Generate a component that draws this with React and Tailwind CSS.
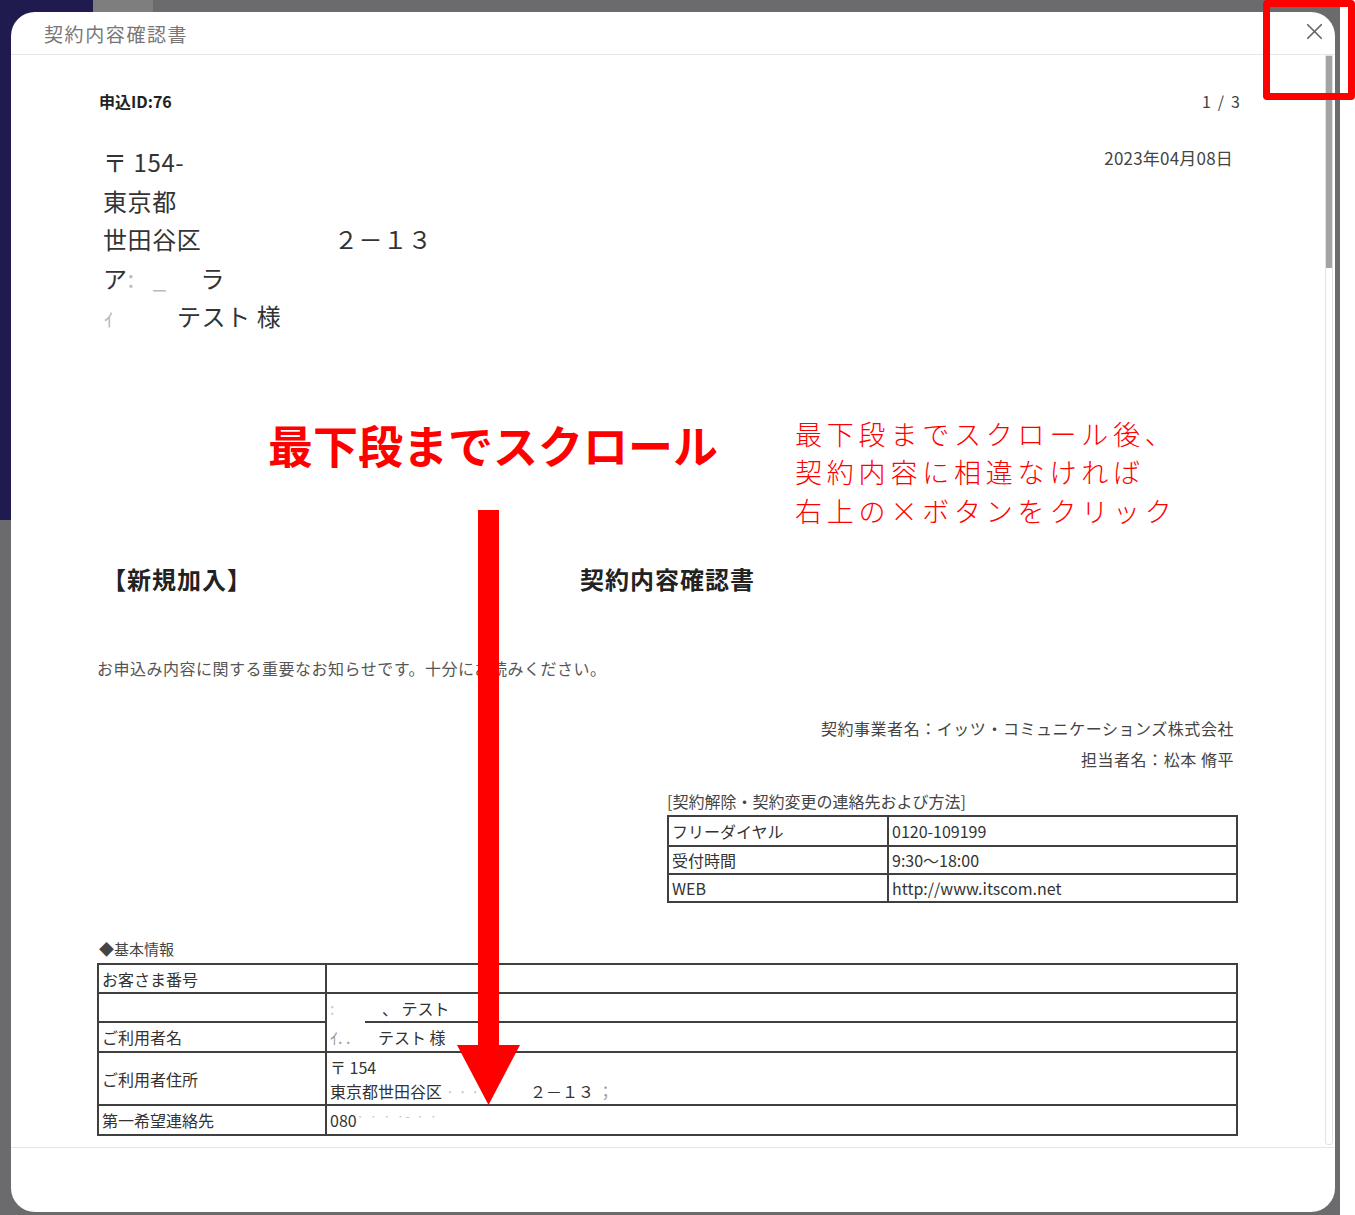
import { X } from 'lucide-react'

function Cell({ children, className = '' }) {
  return <div className={`flex items-center pl-[3px] text-[16px] text-[#333] ${className}`}>{children}</div>
}

function ContactTable() {
  const rows = [
    ['フリーダイヤル', '0120-109199'],
    ['受付時間', '9:30～18:00'],
    ['WEB', 'http://www.itscom.net'],
  ]
  return (
    <div className="border-2 border-[#404040] w-[571px]">
      {rows.map(([k, v], i) => (
        <div key={k} className={`grid grid-cols-[220px_1fr] h-[28px] ${i > 0 ? 'border-t-2 border-[#404040]' : ''}`}>
          <Cell className="border-r-2 border-[#404040]">{k}</Cell>
          <Cell>{v}</Cell>
        </div>
      ))}
    </div>
  )
}

function InfoTable() {
  return (
    <div className="border-2 border-[#404040] w-[1141px]">
      <div className="grid grid-cols-[228px_1fr] h-[27px]">
        <Cell className="border-r-2 border-[#404040]">お客さま番号</Cell>
        <Cell />
      </div>
      <div className="grid grid-cols-[228px_1fr] h-[29px] border-t-2 border-[#404040]">
        <Cell className="border-r-2 border-[#404040]" />
        <Cell className="relative">
          <span className="text-[#ccc] w-[52px]">:</span>
          <span>、 テスト</span>
          <span className="absolute left-0 -bottom-[2px] w-[38px] h-[2px] bg-white" />
        </Cell>
      </div>
      <div className="grid grid-cols-[228px_1fr] h-[30px] border-t-2 border-[#404040]">
        <Cell className="border-r-2 border-[#404040]">ご利用者名</Cell>
        <Cell>
          <span className="text-[#999] w-[48px]">ｲ. .</span>
          <span>テスト 様</span>
        </Cell>
      </div>
      <div className="grid grid-cols-[228px_1fr] h-[53px] border-t-2 border-[#404040]">
        <Cell className="border-r-2 border-[#404040]">ご利用者住所</Cell>
        <div className="flex flex-col justify-center pl-[3px] text-[16px] text-[#333] leading-[24px]">
          <span>〒 154</span>
          <span className="flex">
            <span className="w-[200px]">東京都世田谷区<span className="text-[#ccc]"> · · · ·</span></span>
            <span>２－１３ <span className="text-[#999]">；</span></span>
          </span>
        </div>
      </div>
      <div className="grid grid-cols-[228px_1fr] h-[30px] border-t-2 border-[#404040]">
        <Cell className="border-r-2 border-[#404040]">第一希望連絡先</Cell>
        <Cell>
          080<span className="text-[#bbb] text-[12px] -mt-[8px] tracking-[2px]">· · · ·- · ·</span>
        </Cell>
      </div>
    </div>
  )
}

function Documento() {
  return (
    <div className="pl-[86px] pt-[34px] w-[1227px]">
      <div className="flex justify-between items-center h-[24px] text-[16px] text-[#222]">
        <span className="ml-[2px] font-semibold">申込ID:76</span>
        <span className="mr-[-2px] flex gap-[7px] text-[16px] text-[#444]">
          <span>1</span>
          <span>/</span>
          <span>3</span>
        </span>
      </div>

      <div className="flex justify-between mt-[30px]">
        <div className="pl-[6px] text-[24px] leading-[38.5px] text-[#333] tracking-[0.6px]">
          <div>〒 154-</div>
          <div>東京都</div>
          <div className="flex">
            <span className="w-[231px]">世田谷区</span>
            <span>２－１３</span>
          </div>
          <div className="flex">
            <span>ア</span>
            <span className="text-[#bbb] w-[73px]">: &nbsp; _</span>
            <span>ラ</span>
          </div>
          <div className="flex">
            <span className="text-[#bbb] w-[74px]">ｨ</span>
            <span>テスト 様</span>
          </div>
        </div>
        <div className="mt-[5px] mr-[5px] text-[17px] leading-[20px] text-[#444] tracking-[0.2px]">2023年04月08日</div>
      </div>

      <div className="flex mt-[79px] pl-[171px]">
        <span className="w-[527px] mt-[2px] text-[45px] leading-[56px] font-bold text-[#ff0000]">最下段までスクロール</span>
        <div className="text-[27px] leading-[38.5px] tracking-[4.8px] text-[#ff0000] font-light">
          <div>最下段までスクロール後、</div>
          <div>契約内容に相違なければ</div>
          <div>右上の×ボタンをクリック</div>
        </div>
      </div>

      <div className="flex mt-[33px] h-[32px] items-center text-[24px] font-bold text-[#222]">
        <span className="ml-[5px] w-[478px] tracking-[1px]">【新規加入】</span>
        <span className="tracking-[1px]">契約内容確認書</span>
      </div>

      <div className="mt-[62px] h-[22px] flex items-center text-[16px] text-[#555] tracking-[0.5px]">
        お申込み内容に関する重要なお知らせです。十分にお読みください。
      </div>

      <div className="mt-[38px] flex flex-col items-end pr-[4px] text-[16px] text-[#444] leading-[22px] tracking-[0.55px]">
        <div>契約事業者名：イッツ・コミュニケーションズ株式会社</div>
        <div className="mt-[9px]">担当者名：松本 脩平</div>
      </div>

      <div className="ml-[570px] mt-[20px]">
        <div className="h-[22px] flex items-center text-[16px] text-[#444]">[契約解除・契約変更の連絡先および方法]</div>
        <div className="mt-[3px]">
          <ContactTable />
        </div>
      </div>

      <div className="mt-[35px] ml-[2px] h-[22px] flex items-center text-[15px] text-[#444]">◆基本情報</div>
      <div className="mt-[3px]">
        <InfoTable />
      </div>
    </div>
  )
}

export default function App() {
  return (
    <div className="relative w-[1355px] h-[1215px] bg-white overflow-hidden font-['Noto_Sans_CJK_JP',sans-serif]">
      <div className="relative w-[1340px] h-[1215px] bg-[#6b6b6d] pt-[12px] pl-[11px]">
        <div className="absolute left-0 top-0 w-[93px] h-[520px] bg-[#1f1b4f]" />
        <div className="absolute left-[93px] top-0 w-[60px] h-[12px] bg-[#7e7e7e]" />

        <div className="relative w-[1324px] h-[1200px] bg-white rounded-[24px] flex flex-col overflow-hidden">
          <div className="h-[43px] shrink-0 border-b border-[#e6e6e6] flex items-start justify-between pl-[33px] pr-[7px]">
            <span className="mt-[10px] text-[19px] leading-[24px] tracking-[1.6px] text-[#777]">契約内容確認書</span>
            <button className="mt-[6px] text-[#666]">
              <X size={27} strokeWidth={1.5} />
            </button>
          </div>

          <div className="h-[1093px] shrink-0 flex border-b border-[#e6e6e6]">
            <div className="flex-1 overflow-hidden">
              <Documento />
            </div>
            <div className="w-[8px] mr-[2px] mb-[2px] rounded-b-[3px] border border-[#e2e2e2] flex flex-col">
              <div className="h-[212px] bg-[#a3a3a3]" />
            </div>
          </div>

          <div className="flex-1" />
        </div>
      </div>

      <svg className="absolute left-[457px] top-[510px]" width="64" height="596" viewBox="0 0 64 596">
        <path d="M21 0 H42 V535 H63 L31.5 595 L0 535 H21 Z" fill="#ff0000" />
      </svg>

      <div className="absolute left-[1263px] top-0 w-[92px] h-[100px] border-[7px] border-[#ff0000] rounded-[4px]" />
    </div>
  )
}
